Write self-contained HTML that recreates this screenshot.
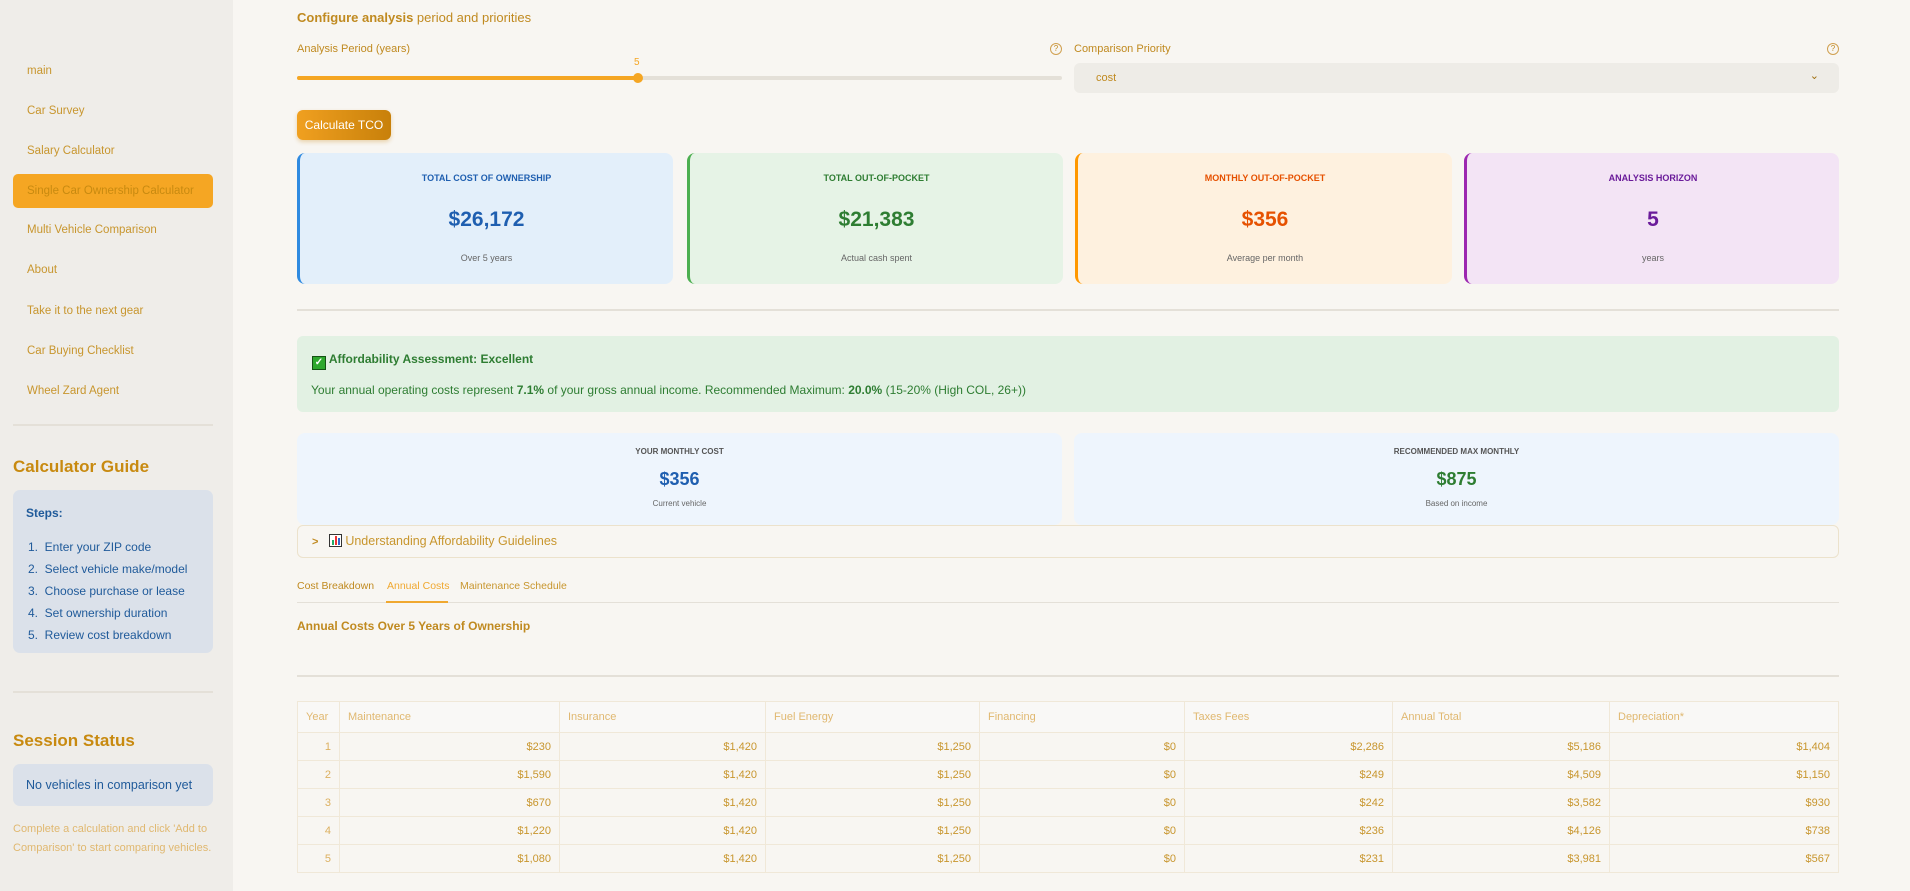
<!DOCTYPE html>
<html><head><meta charset="utf-8"><style>
*{box-sizing:border-box;margin:0;padding:0}
body{width:1910px;height:891px;overflow:hidden;background:#f8f6f2;font-family:"Liberation Sans",sans-serif;color:#c08a20;position:relative}
.a{position:absolute}
#side{left:0;top:0;width:233px;height:891px;background:#efede9}
.nav{position:absolute;left:27px;font-size:11.5px;color:#c8962e;line-height:16px}
.act{position:absolute;left:13px;top:174px;width:200px;height:34px;background:#f5a623;border-radius:5px}
.hr{position:absolute;height:2px;background:#e4e0d8}
.card{position:absolute;top:153px;height:131px;border-radius:8px;text-align:center}
.card .t{position:absolute;top:20px;left:0;right:0;font-size:9px;font-weight:bold}
.card .v{position:absolute;top:55px;left:0;right:0;font-size:21px;font-weight:bold}
.card .s{position:absolute;top:100px;left:0;right:0;font-size:9px;color:#666}
table{border-collapse:collapse;font-size:11px}
td,th{border:1px solid #f0e8d8;height:28px;padding:0 8px;font-weight:normal}
th{text-align:left;color:#e0b870;background:#f9f8f6;height:31px}
td{text-align:right;color:#c8962e}
td:first-child{color:#dcb060}
</style></head><body>
<div id="side" class="a">
<div class="act"></div>
<div class="nav" style="top:63px">main</div>
<div class="nav" style="top:103px">Car Survey</div>
<div class="nav" style="top:143px">Salary Calculator</div>
<div class="nav" style="top:183px;color:#c88a10">Single Car Ownership Calculator</div>
<div class="nav" style="top:222px">Multi Vehicle Comparison</div>
<div class="nav" style="top:262px">About</div>
<div class="nav" style="top:303px">Take it to the next gear</div>
<div class="nav" style="top:343px">Car Buying Checklist</div>
<div class="nav" style="top:383px">Wheel Zard Agent</div>
<div class="hr" style="left:13px;top:424px;width:200px"></div>
<div class="a" style="left:13px;top:457px;font-size:17px;font-weight:bold;color:#c88a10">Calculator Guide</div>
<div class="a" style="left:13px;top:490px;width:200px;height:163px;background:#dbe1ea;border-radius:7px;color:#1f5a9a;font-size:12px">
<div class="a" style="left:13px;top:16px;font-weight:bold">Steps:</div>
<div class="a" style="left:15px;top:46px;line-height:22px">1.&nbsp; Enter your ZIP code<br>2.&nbsp; Select vehicle make/model<br>3.&nbsp; Choose purchase or lease<br>4.&nbsp; Set ownership duration<br>5.&nbsp; Review cost breakdown</div>
</div>
<div class="hr" style="left:13px;top:691px;width:200px"></div>
<div class="a" style="left:13px;top:731px;font-size:17px;font-weight:bold;color:#c88a10">Session Status</div>
<div class="a" style="left:13px;top:764px;width:200px;height:42px;background:#dbe1ea;border-radius:7px;color:#1f5a9a;font-size:12.5px;padding:14px 0 0 13px">No vehicles in comparison yet</div>
<div class="a" style="left:13px;top:820px;width:205px;font-size:11px;line-height:19px;color:#e0b870">Complete a calculation and click 'Add to Comparison' to start comparing vehicles.</div>
</div>

<div class="a" style="left:297px;top:10px;font-size:13px;color:#c08a20"><b>Configure analysis</b> period and priorities</div>
<div class="a" style="left:297px;top:43px;font-size:11px">Analysis Period (years)</div>
<div class="a" style="left:1050px;top:43px;width:12px;height:12px;border:1px solid #d0a050;border-radius:50%;font-size:8px;text-align:center;line-height:10px">?</div>
<div class="a" style="left:634px;top:57px;font-size:10px;color:#f5a623">5</div>
<div class="a" style="left:297px;top:76px;width:765px;height:4px;background:#e4e0d8;border-radius:2px"></div>
<div class="a" style="left:297px;top:76px;width:341px;height:4px;background:#f5a623;border-radius:2px"></div>
<div class="a" style="left:633px;top:73px;width:10px;height:10px;background:#f5a623;border-radius:50%"></div>
<div class="a" style="left:1074px;top:43px;font-size:11px">Comparison Priority</div>
<div class="a" style="left:1827px;top:43px;width:12px;height:12px;border:1px solid #d0a050;border-radius:50%;font-size:8px;text-align:center;line-height:10px">?</div>
<div class="a" style="left:1074px;top:63px;width:765px;height:30px;background:#eeece7;border-radius:6px;font-size:11px;padding:9px 0 0 22px">cost<span style="position:absolute;right:20px;top:6px;font-size:11px;color:#a07010">&#8964;</span></div>
<div class="a" style="left:297px;top:110px;width:94px;height:30px;background:linear-gradient(90deg,#f0a020,#c8800a);border-radius:6px;color:#fff;font-size:12px;text-align:center;line-height:30px;box-shadow:0 2px 4px rgba(200,130,10,.3)">Calculate TCO</div>

<div class="card" style="left:297px;width:376px;background:#e3effa;border-left:3px solid #2f8ae0"><div class="t" style="color:#1f5fb0">TOTAL COST OF OWNERSHIP</div><div class="v" style="color:#1f5fb0">$26,172</div><div class="s">Over 5 years</div></div>
<div class="card" style="left:687px;width:376px;background:#e6f3e6;border-left:3px solid #4caf50"><div class="t" style="color:#2e7d32">TOTAL OUT-OF-POCKET</div><div class="v" style="color:#2e7d32">$21,383</div><div class="s">Actual cash spent</div></div>
<div class="card" style="left:1075px;width:377px;background:#fef1df;border-left:3px solid #ff9800"><div class="t" style="color:#e65100">MONTHLY OUT-OF-POCKET</div><div class="v" style="color:#e65100">$356</div><div class="s">Average per month</div></div>
<div class="card" style="left:1464px;width:375px;background:#f3e4f5;border-left:3px solid #9c27b0"><div class="t" style="color:#6a1b9a">ANALYSIS HORIZON</div><div class="v" style="color:#6a1b9a">5</div><div class="s">years</div></div>

<div class="hr" style="left:297px;top:309px;width:1542px"></div>
<div class="a" style="left:297px;top:336px;width:1542px;height:76px;background:#e2f1e3;border-radius:6px;color:#2e7d32">
<div class="a" style="left:15px;top:16px;font-size:12px;font-weight:bold"><span style="display:inline-block;width:14px;height:14px;background:#2ea82e;border:1px solid #145214;color:#fff;font-size:10px;text-align:center;line-height:12px;vertical-align:-2px">✓</span> Affordability Assessment: Excellent</div>
<div class="a" style="left:14px;top:47px;font-size:12px;white-space:nowrap">Your annual operating costs represent <b>7.1%</b> of your gross annual income. Recommended Maximum: <b>20.0%</b> (15-20% (High COL, 26+))</div>
</div>

<div class="card" style="top:433px;height:92px;left:297px;width:765px;background:#eef5fd"><div class="t" style="top:14px;color:#555;font-size:8px">YOUR MONTHLY COST</div><div class="v" style="top:36px;font-size:18px;color:#1f5fb0">$356</div><div class="s" style="top:66px;font-size:8px">Current vehicle</div></div>
<div class="card" style="top:433px;height:92px;left:1074px;width:765px;background:#eef5fd"><div class="t" style="top:14px;color:#555;font-size:8px">RECOMMENDED MAX MONTHLY</div><div class="v" style="top:36px;font-size:18px;color:#2e7d32">$875</div><div class="s" style="top:66px;font-size:8px">Based on income</div></div>
<div class="a" style="left:297px;top:525px;width:1542px;height:33px;border:1px solid #ece2cc;border-radius:6px;font-size:12.5px;color:#c8962e;padding:8px 0 0 14px"><b style="font-size:11px;color:#c08a20">&gt;</b>&nbsp;&nbsp;&nbsp;<span style="display:inline-block;width:13px;height:13px;border:1px solid #333;background:#fff;vertical-align:-2px;position:relative"><i style="position:absolute;left:2px;bottom:1px;width:2px;height:5px;background:#2a6"></i><i style="position:absolute;left:5px;bottom:1px;width:2px;height:9px;background:#e33"></i><i style="position:absolute;left:8px;bottom:1px;width:2px;height:7px;background:#36c"></i></span> Understanding Affordability Guidelines</div>

<div class="a" style="left:297px;top:580px;font-size:10.5px;color:#c08a20">Cost Breakdown</div>
<div class="a" style="left:387px;top:580px;font-size:10.5px;color:#f0a830">Annual Costs</div>
<div class="a" style="left:460px;top:580px;font-size:10.5px;color:#c8962e">Maintenance Schedule</div>
<div class="hr" style="left:297px;top:602px;width:1542px;height:1px"></div>
<div class="a" style="left:386px;top:601px;width:62px;height:2px;background:#f0a830"></div>
<div class="a" style="left:297px;top:619px;font-size:12px;font-weight:bold;color:#c08a20">Annual Costs Over 5 Years of Ownership</div>
<div class="hr" style="left:297px;top:675px;width:1542px"></div>

<table class="a" style="left:297px;top:701px;width:1542px;border:1px solid #ece2cc">
<tr><th style="width:42px">Year</th><th style="width:220px">Maintenance</th><th style="width:206px">Insurance</th><th style="width:214px">Fuel Energy</th><th style="width:205px">Financing</th><th style="width:208px">Taxes Fees</th><th style="width:217px">Annual Total</th><th>Depreciation*</th></tr>
<tr><td>1</td><td>$230</td><td>$1,420</td><td>$1,250</td><td>$0</td><td>$2,286</td><td>$5,186</td><td>$1,404</td></tr>
<tr><td>2</td><td>$1,590</td><td>$1,420</td><td>$1,250</td><td>$0</td><td>$249</td><td>$4,509</td><td>$1,150</td></tr>
<tr><td>3</td><td>$670</td><td>$1,420</td><td>$1,250</td><td>$0</td><td>$242</td><td>$3,582</td><td>$930</td></tr>
<tr><td>4</td><td>$1,220</td><td>$1,420</td><td>$1,250</td><td>$0</td><td>$236</td><td>$4,126</td><td>$738</td></tr>
<tr><td>5</td><td>$1,080</td><td>$1,420</td><td>$1,250</td><td>$0</td><td>$231</td><td>$3,981</td><td>$567</td></tr>
</table>
</body></html>
